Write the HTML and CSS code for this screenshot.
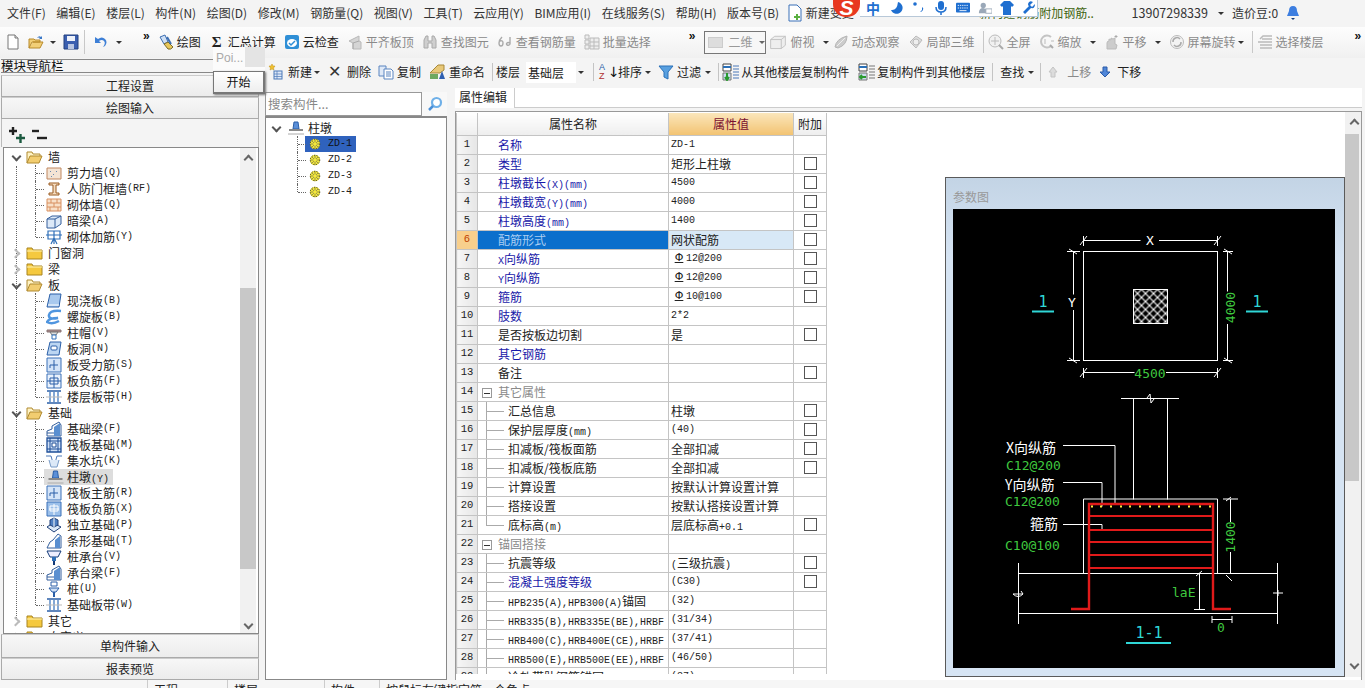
FILE: index.html
```html
<!DOCTYPE html>
<html lang="zh-CN">
<head>
<meta charset="utf-8">
<title>钢筋算量</title>
<link rel="stylesheet" href="styles.css">
</head>
<body>
<svg class="sprite" xmlns="http://www.w3.org/2000/svg">
<defs>
<symbol id="i-new" viewBox="0 0 16 16"><path d="M3 1h7l3 3v11H3z" fill="#fff" stroke="#777"/><path d="M10 1v3h3" fill="#ddd" stroke="#777"/></symbol>
<symbol id="i-open" viewBox="0 0 16 16"><path d="M1 14V5h5l1 1h5v2H4l-3 6h11l3-6H5" fill="#f2cf77" stroke="#b88a2a"/><path d="M9 4q2-3 4-1l1-1v3h-3l1-1q-1-1-3 0z" fill="#3a78c8"/></symbol>
<symbol id="i-save" viewBox="0 0 16 16"><path d="M1 1h14v14H1z" fill="#3b5fb0" stroke="#23407f"/><path d="M4 2h8v5H4z" fill="#eef2fa"/><path d="M5 10h6v5H5z" fill="#b9c6e2"/></symbol>
<symbol id="i-undo" viewBox="0 0 16 16"><path d="M3 3v6h6L7 7q3-2 5 0t-1 6l2-1q3-4 0-7t-7 0z" fill="#3d7fd6"/></symbol>
<symbol id="i-paint" viewBox="0 0 16 16"><path d="M2 3l5-2 3 7-4 2z" fill="#cfe0f5" stroke="#3d6fb2"/><path d="M6 10l4-2 5 5q-2 3-5 2z" fill="#e8c75a" stroke="#7a6a2a"/><path d="M9 3l4 7" stroke="#3d6fb2" stroke-width="2"/></symbol>
<symbol id="i-cloud" viewBox="0 0 16 16"><rect x="1" y="1" width="14" height="14" rx="2" fill="#2f8fd6"/><ellipse cx="8" cy="9" rx="5" ry="4" fill="#fff"/><path d="M5 9l2 2 4-4" fill="none" stroke="#2f8fd6" stroke-width="1.5"/></symbol>
<symbol id="i-align" viewBox="0 0 16 16"><path d="M2 7l10-5v5l2 1v7H6V9z" fill="#d5d5d5" stroke="#b8b8b8"/><path d="M6 15V9l6-2" stroke="#aaa" fill="none"/></symbol>
<symbol id="i-bino" viewBox="0 0 16 16"><path d="M2 6l2-4h2v5h4V2h2l2 4v8H10V9H6v5H2z" fill="#cfcfcf" stroke="#aaa"/></symbol>
<symbol id="i-look" viewBox="0 0 16 16"><path d="M5 3q-3 3-3 6t2 3 2-3-3-2M10 11q2 1 3-1V3M13 9q-2-1-3 0t0 2" fill="none" stroke="#aaa" stroke-width="1.4"/></symbol>
<symbol id="i-batch" viewBox="0 0 16 16"><path d="M1 1h4v4H1zM1 6h4v4H1zM1 11h4v4H1zM6 4h9v11H6z" fill="#eee" stroke="#bbb"/><path d="M6 8h9M6 12h9M10 4v11" stroke="#bbb"/></symbol>
<symbol id="i-box" viewBox="0 0 22 18"><path d="M2 6l5-4h13v11l-5 4H2z" fill="#eee" stroke="#bbb"/><path d="M2 6h13v11M15 6l5-4" fill="none" stroke="#bbb"/></symbol>
<symbol id="i-orbit" viewBox="0 0 16 16"><path d="M2 13Q3 5 14 2q0 9-9 12z" fill="#ccc" stroke="#b5b5b5"/><path d="M4 12l8-8" stroke="#eee"/></symbol>
<symbol id="i-local" viewBox="0 0 16 16"><path d="M8 2l6 4-6 8-6-6z" fill="#ddd" stroke="#bbb"/><circle cx="8" cy="8" r="3" fill="#eee" stroke="#bbb"/></symbol>
<symbol id="i-full" viewBox="0 0 16 16"><circle cx="7" cy="7" r="6" fill="#f1f1f1" stroke="#bbb"/><path d="M7 3v8M3 7h8" stroke="#bbb"/><path d="M11 11l4 4" stroke="#aaa" stroke-width="2"/></symbol>
<symbol id="i-zoom" viewBox="0 0 16 16"><path d="M12 3a6 6 0 1 0 0 9" fill="none" stroke="#c4c4c4" stroke-width="2"/><path d="M6 5v5M12 7h3" stroke="#bbb"/><path d="M11 11l3 3" stroke="#aaa" stroke-width="2"/></symbol>
<symbol id="i-pan" viewBox="0 0 16 16"><path d="M3 15V9q0-2 2-2V5l2 1V4l2 1 2-1v6l2 1-1 4z" fill="#ccc" stroke="#bbb"/><path d="M12 1v3M10.500 2.500h3" stroke="#aaa"/></symbol>
<symbol id="i-rot" viewBox="0 0 16 16"><circle cx="8" cy="8" r="6.500" fill="#f3f3f3" stroke="#bbb"/><path d="M4 8a4 4 0 0 1 7-3M12 8a4 4 0 0 1-7 3" fill="none" stroke="#aaa" stroke-width="1.500"/></symbol>
<symbol id="i-floors" viewBox="0 0 16 16"><path d="M3 5l3-3h9M1 8h14M3 11h12M3 14h12M5 5h10" stroke="#bbb" fill="none" stroke-width="1.500"/></symbol>
<symbol id="i-add" viewBox="0 0 16 16"><path d="M5 0l1 2h2L6.500 4l.5 2-2-1-2 1 .5-2L2 2h2z" fill="#f0c030" stroke="#c09010" stroke-width=".5"/><rect x="7" y="7" width="8" height="8" fill="#dfe9f7" stroke="#4a78b8"/><path d="M7 10h8M7 12.500h8M10 7v8" stroke="#4a78b8" stroke-width=".7"/></symbol>
<symbol id="i-copy" viewBox="0 0 16 16"><path d="M1 2h7v10H1z" fill="#dfe9f7" stroke="#5a85c0"/><path d="M6 5h7l2 2v8H6z" fill="#fff" stroke="#5a85c0"/><path d="M8 8h5M8 10h5M8 12h5" stroke="#5a85c0"/></symbol>
<symbol id="i-rename" viewBox="0 0 18 16"><path d="M2 9L10 1l6 0v5l-4 3z" fill="#e8c878" stroke="#a88838"/><path d="M2 10h8v5H2z" fill="#6ea860"/><path d="M11 15l3-8 3 8z" fill="#2f5fb0"/></symbol>
<symbol id="i-filter" viewBox="0 0 16 16"><path d="M1 2h14L10 8v7l-4-2V8z" fill="#58a0e0" stroke="#2a70b8"/></symbol>
<symbol id="i-cfrom" viewBox="0 0 18 18"><path d="M1 1h8v7H1z" fill="#fff" stroke="#444"/><path d="M1 4h8" stroke="#2a70b8" stroke-width="2"/><path d="M1 10h8v7H1z" fill="#cde" stroke="#777"/><path d="M5 10v6M3 14l2 3 2-3" stroke="#2a9a30" stroke-width="2" fill="none"/><path d="M11 3h6M11 6h6M11 9h6M11 12h6M11 15h6" stroke="#4a78b8"/></symbol>
<symbol id="i-cto" viewBox="0 0 18 18"><path d="M1 1h8v7H1z" fill="#fff" stroke="#444"/><path d="M1 4h8" stroke="#2a70b8" stroke-width="2"/><path d="M1 10h8v7H1z" fill="#cde" stroke="#777"/><path d="M8 14H2M4 12l-2 2 2 2" stroke="#2a9a30" stroke-width="2" fill="none"/><path d="M11 3h6M11 6h6M11 9h6M11 12h6M11 15h6" stroke="#777"/></symbol>
<symbol id="i-up" viewBox="0 0 12 12"><path d="M6 1l4 5H8v5H4V6H2z" fill="#dcdcdc" stroke="#c4c4c4"/></symbol>
<symbol id="i-down" viewBox="0 0 12 12"><path d="M4 1h4v5h3l-5 5-5-5h3z" fill="#4f86d8" stroke="#2a5aa8"/></symbol>
<symbol id="i-fo" viewBox="0 0 17 16"><path d="M1 14V3h5l1 2h7v2" fill="#fff3c4" stroke="#b08a30"/><path d="M1 14l3-7h12l-3 7z" fill="#f2cd70" stroke="#b08a30"/></symbol>
<symbol id="i-fc" viewBox="0 0 17 16"><path d="M1 14V3h5l1 2h9v9z" fill="#f5c93f" stroke="#a88420"/><path d="M1 6h15" stroke="#fff4b8"/></symbol>
<symbol id="t-shear" viewBox="0 0 16 16"><path d="M1 3h14v11H1z" fill="#f4e4d4" stroke="#c08860"/><path d="M4 6l1 1M7 9l1 1M5 11l1 1M10 6l1 1" stroke="#6a8ab0"/></symbol>
<symbol id="t-door" viewBox="0 0 16 16"><path d="M3 2h10v2h-3v8h3v2H3v-2h4V4H3z" fill="#f4dcc0" stroke="#9a5a20"/></symbol>
<symbol id="t-brick" viewBox="0 0 16 16"><path d="M1 2h14v12H1z" fill="#f8e0c8" stroke="#d89060"/><path d="M1 6h14M1 10h14M5 2v4M11 2v4M8 6v4M4 10v4M12 10v4" stroke="#d89060"/></symbol>
<symbol id="t-beam" viewBox="0 0 16 16"><path d="M1 6l5-3h9v8l-6 4H1z" fill="#dce9f8" stroke="#345f9c"/><path d="M1 6h8v9M9 6l6-3" fill="none" stroke="#345f9c"/></symbol>
<symbol id="t-mas" viewBox="0 0 16 16"><path d="M2 2h12v8H2z" fill="#fff" stroke="#2f6fb8" stroke-width="1.200"/><path d="M0 6h16M8 2v13M5 15l3-6 3 6" fill="none" stroke="#2f6fb8" stroke-width="1.200"/></symbol>
<symbol id="t-slab" viewBox="0 0 16 16"><path d="M4 1h11l-2 13H1z" fill="#a9c9ee" stroke="#2a5fa8"/><path d="M2 12h11" stroke="#fff"/></symbol>
<symbol id="t-spiral" viewBox="0 0 16 16"><path d="M15 2Q4 1 3 6t9 3Q3 9 1 13q5 3 12-1" fill="none" stroke="#4f95df" stroke-width="2.500"/></symbol>
<symbol id="t-cap" viewBox="0 0 16 16"><path d="M1 5h14v2H1z" fill="#a88" stroke="#877"/><path d="M4 7l2 3h4l2-3z" fill="#ddd" stroke="#777"/><path d="M6 10h4v4H6z" fill="#fff" stroke="#2f6fb8"/></symbol>
<symbol id="t-hole" viewBox="0 0 16 16"><path d="M4 1h11l-2 13H1z" fill="#bcd6f2" stroke="#2a5fa8"/><rect x="5" y="5" width="6" height="4" rx="1" fill="#fff" stroke="#2a5fa8"/></symbol>
<symbol id="t-g1" viewBox="0 0 16 16"><path d="M1 1h14v14H1z" fill="#d4e4f8" stroke="#3a70b8"/><path d="M8 3v10M4 8h8M4 8v3" fill="none" stroke="#2a5fa8"/></symbol>
<symbol id="t-g2" viewBox="0 0 16 16"><path d="M1 1h14v14H1z" fill="#eaf2fc" stroke="#3a70b8"/><path d="M8 1v14M1 8h14M4 5h8v6H4z" fill="none" stroke="#2a5fa8"/></symbol>
<symbol id="t-g3" viewBox="0 0 16 16"><path d="M1 1h14v14H1z" fill="#9cc0ea" stroke="#3a70b8"/><path d="M8 3v11M3 8h10M4 5h8v5H4z" fill="none" stroke="#fff"/></symbol>
<symbol id="t-band" viewBox="0 0 16 16"><path d="M1 2h14M1 14h14" stroke="#2a5fa8" stroke-width="1.500"/><path d="M4 3v10M8 3v10M12 3v10" stroke="#5a8ac8" stroke-width="1.500"/><path d="M0 8h16" stroke="#bbb"/></symbol>
<symbol id="t-fbeam" viewBox="0 0 16 16"><path d="M1 15V10l5-2V5l7-4 2 3v11H1z" fill="#fff" stroke="#345f9c"/><path d="M8 15V6l6-4v13z" fill="#5a8fd0"/><path d="M1 12h7" stroke="#345f9c"/></symbol>
<symbol id="t-raft" viewBox="0 0 16 16"><path d="M1 1h14v14H1z" fill="#cfe0f6" stroke="#1f4f98" stroke-width="1.300"/><path d="M4 1v14M12 1v14M1 4h14M1 12h14" stroke="#1f4f98"/><path d="M6 6h4v4H6z" fill="#fff" stroke="#1f4f98"/></symbol>
<symbol id="t-pit" viewBox="0 0 16 16"><path d="M0 3h5l2 7h2l2-7h5" fill="none" stroke="#4a78b8"/><path d="M3 7l2 7h6l2-7" fill="#dce9f8" stroke="#7a9cc8"/></symbol>
<symbol id="t-ped" viewBox="0 0 16 16"><path d="M6 2h4l1 7H5z" fill="#5a8fd8" stroke="#2a5fa8"/><path d="M1 10h14" stroke="#888" stroke-width="2"/><path d="M0 14h16" stroke="#aaa"/></symbol>
<symbol id="t-ind" viewBox="0 0 16 16"><path d="M1 10l6-4 8 4-7 5z" fill="#dce9f8" stroke="#1f3f78"/><path d="M4 8V3l4-2 4 2v5l-4 2z" fill="#4f7fc0" stroke="#1f3f78"/><path d="M8 1v9" stroke="#fff"/></symbol>
<symbol id="t-strip" viewBox="0 0 16 16"><path d="M1 15l3-6 3-2 5-6 3 2v12z" fill="#fff" stroke="#345f9c"/><path d="M9 15V7l5-4v12z" fill="#5a8fd0"/></symbol>
<symbol id="t-pilecap" viewBox="0 0 16 16"><path d="M1 2h14l-3 6H4z" fill="#eef" stroke="#123a78"/><path d="M6 8h4v4H6z" fill="#2f6fb8"/><path d="M8 12v4" stroke="#123a78" stroke-width="2"/></symbol>
<symbol id="t-pile" viewBox="0 0 16 16"><path d="M5 1h6v4H5z" fill="#fff" stroke="#2a5fa8"/><path d="M3 7h10l-3 4H6z" fill="#cfe0f6" stroke="#2a5fa8"/><path d="M8 11v5" stroke="#2a5fa8" stroke-width="2"/></symbol>
<symbol id="t-gear" viewBox="0 0 14 14"><circle cx="7" cy="7" r="6" fill="#f4e93a"/><circle cx="7" cy="7" r="5.500" fill="none" stroke="#222" stroke-width="1" stroke-dasharray="1.500 1.500"/><path d="M7 2v10M2 7h10M3.500 3.500l7 7M10.500 3.500l-7 7" stroke="#555" stroke-width=".7"/><circle cx="7" cy="7" r="2" fill="#f4e93a"/></symbol>
<symbol id="i-search" viewBox="0 0 16 16"><circle cx="9.500" cy="6.500" r="4.500" fill="#fff" stroke="#6fb0e8" stroke-width="2.200"/><path d="M6 10l-4 4" stroke="#4a90d8" stroke-width="2.500"/></symbol>
<symbol id="i-expand" viewBox="0 0 18 16"><path d="M1 4h8M5 0v8" stroke="#222" stroke-width="2.400"/><path d="M8 11h9M12.500 7v9" stroke="#1c5a40" stroke-width="2.400"/></symbol>
<symbol id="i-collapse" viewBox="0 0 18 16"><path d="M1 4h7" stroke="#222" stroke-width="2.400"/><path d="M6 11h10" stroke="#222" stroke-width="2.400"/></symbol>
<symbol id="i-bell" viewBox="0 0 14 16"><path d="M7 1q4 0 4 5l2 5H1l2-5q0-5 4-5z" fill="#3d7ee0"/><path d="M5 13h4l-2 2z" fill="#123a78"/></symbol>
<symbol id="i-doc" viewBox="0 0 16 18"><path d="M2 1h8l4 4v12H2z" fill="#fff" stroke="#3a70b8"/><path d="M9 10h2v2h2v2h-2v2H9v-2H7v-2h2z" fill="#5ab040"/></symbol>
</defs>
</svg>
<div class="app">
  <header class="menubar">
    <span>文件(F)</span><span>编辑(E)</span><span>楼层(L)</span><span>构件(N)</span><span>绘图(D)</span><span>修改(M)</span><span>钢筋量(Q)</span><span>视图(V)</span><span>工具(T)</span><span>云应用(Y)</span><span>BIM应用(I)</span><span>在线服务(S)</span><span>帮助(H)</span><span>版本号(B)</span>
    <span class="doc-item"><svg class="ic"><use href="#i-doc"/></svg>新建变更</span>
    <span class="news">新构建钢筋附加钢筋..</span>
    <span class="phone">13907298339</span><i class="caret"></i>
    <span class="bean">造价豆:0</span>
    <svg class="bell"><use href="#i-bell"/></svg>
  </header>

  <nav class="toolbar">
    <svg class="ic"><use href="#i-new"/></svg>
    <svg class="ic ic-open"><use href="#i-open"/></svg><i class="caret"></i>
    <svg class="ic ic-save"><use href="#i-save"/></svg>
    <b class="sep"></b>
    <svg class="ic"><use href="#i-undo"/></svg><i class="caret caret-undo"></i>
    <span class="more more-a">»</span>
    <span class="tool"><svg class="ic"><use href="#i-paint"/></svg>绘图</span>
    <span class="tool"><span class="sigma">Σ</span>汇总计算</span>
    <span class="tool"><svg class="ic"><use href="#i-cloud"/></svg>云检查</span>
    <span class="tool off"><svg class="ic"><use href="#i-align"/></svg>平齐板顶</span>
    <span class="tool off"><svg class="ic"><use href="#i-bino"/></svg>查找图元</span>
    <span class="tool off"><svg class="ic"><use href="#i-look"/></svg>查看钢筋量</span>
    <span class="tool off"><svg class="ic"><use href="#i-batch"/></svg>批量选择</span>
    <span class="more more-b">»</span>
    <span class="combo"><i class="combo-sq"></i>二维<i class="caret"></i></span>
    <span class="tool off tool-view"><svg class="ic-wide"><use href="#i-box"/></svg>俯视<i class="caret caret-far"></i></span>
    <span class="tool off"><svg class="ic"><use href="#i-orbit"/></svg>动态观察</span>
    <span class="tool off"><svg class="ic"><use href="#i-local"/></svg>局部三维</span>
    <b class="sep sep-t"></b>
    <span class="tool off"><svg class="ic"><use href="#i-full"/></svg>全屏</span>
    <span class="tool off"><svg class="ic"><use href="#i-zoom"/></svg>缩放<i class="caret caret-far"></i></span>
    <span class="tool off"><svg class="ic"><use href="#i-pan"/></svg>平移<i class="caret caret-far"></i></span>
    <span class="tool off"><svg class="ic"><use href="#i-rot"/></svg>屏幕旋转<i class="caret caret-near"></i></span>
    <b class="sep sep-t"></b>
    <span class="tool off"><svg class="ic"><use href="#i-floors"/></svg>选择楼层</span>
    <span class="more more-c">»</span>
  </nav>

  <div class="main">
    <aside class="nav">
      <div class="nav-title">模块导航栏</div>
      <div class="nav-btn nav-btn-first">工程设置</div>
      <div class="nav-btn">绘图输入</div>
      <div class="nav-tools"><svg class="ic-exp"><use href="#i-expand"/></svg><svg class="ic-exp"><use href="#i-collapse"/></svg></div>
      <div class="tree-box">
        <div class="tree">
          <div class="g"><i class="chev down"></i><svg class="fd"><use href="#i-fo"/></svg>墙</div>
          <div class="k"><svg class="ti"><use href="#t-shear"/></svg>剪力墙<span class="l">(Q)</span></div>
          <div class="k"><svg class="ti"><use href="#t-door"/></svg>人防门框墙<span class="l">(RF)</span></div>
          <div class="k"><svg class="ti"><use href="#t-brick"/></svg>砌体墙<span class="l">(Q)</span></div>
          <div class="k"><svg class="ti"><use href="#t-beam"/></svg>暗梁<span class="l">(A)</span></div>
          <div class="k last"><svg class="ti"><use href="#t-mas"/></svg>砌体加筋<span class="l">(Y)</span></div>
          <div class="g"><i class="chev right"></i><svg class="fd"><use href="#i-fc"/></svg>门窗洞</div>
          <div class="g"><i class="chev right"></i><svg class="fd"><use href="#i-fc"/></svg>梁</div>
          <div class="g"><i class="chev down"></i><svg class="fd"><use href="#i-fo"/></svg>板</div>
          <div class="k"><svg class="ti"><use href="#t-slab"/></svg>现浇板<span class="l">(B)</span></div>
          <div class="k"><svg class="ti"><use href="#t-spiral"/></svg>螺旋板<span class="l">(B)</span></div>
          <div class="k"><svg class="ti"><use href="#t-cap"/></svg>柱帽<span class="l">(V)</span></div>
          <div class="k"><svg class="ti"><use href="#t-hole"/></svg>板洞<span class="l">(N)</span></div>
          <div class="k"><svg class="ti"><use href="#t-g1"/></svg>板受力筋<span class="l">(S)</span></div>
          <div class="k"><svg class="ti"><use href="#t-g2"/></svg>板负筋<span class="l">(F)</span></div>
          <div class="k last"><svg class="ti"><use href="#t-band"/></svg>楼层板带<span class="l">(H)</span></div>
          <div class="g"><i class="chev down"></i><svg class="fd"><use href="#i-fo"/></svg>基础</div>
          <div class="k"><svg class="ti"><use href="#t-fbeam"/></svg>基础梁<span class="l">(F)</span></div>
          <div class="k"><svg class="ti"><use href="#t-raft"/></svg>筏板基础<span class="l">(M)</span></div>
          <div class="k"><svg class="ti"><use href="#t-pit"/></svg>集水坑<span class="l">(K)</span></div>
          <div class="k cur"><svg class="ti"><use href="#t-ped"/></svg><span class="cur-t">柱墩<span class="l">(Y)</span></span></div>
          <div class="k"><svg class="ti"><use href="#t-g1"/></svg>筏板主筋<span class="l">(R)</span></div>
          <div class="k"><svg class="ti"><use href="#t-g3"/></svg>筏板负筋<span class="l">(X)</span></div>
          <div class="k"><svg class="ti"><use href="#t-ind"/></svg>独立基础<span class="l">(P)</span></div>
          <div class="k"><svg class="ti"><use href="#t-strip"/></svg>条形基础<span class="l">(T)</span></div>
          <div class="k"><svg class="ti"><use href="#t-pilecap"/></svg>桩承台<span class="l">(V)</span></div>
          <div class="k"><svg class="ti"><use href="#t-fbeam"/></svg>承台梁<span class="l">(F)</span></div>
          <div class="k"><svg class="ti"><use href="#t-pile"/></svg>桩<span class="l">(U)</span></div>
          <div class="k last"><svg class="ti"><use href="#t-band"/></svg>基础板带<span class="l">(W)</span></div>
          <div class="g"><i class="chev right"></i><svg class="fd"><use href="#i-fc"/></svg>其它</div>
          <div class="g"><i class="chev right"></i><svg class="fd"><use href="#i-fc"/></svg>自定义</div>
        </div>
        <div class="vsb vsb-tree"><i class="sb-arrow up"></i><i class="thumb thumb-tree"></i><i class="sb-arrow dn"></i></div>
      </div>
      <div class="nav-btn nav-btn-low">单构件输入</div>
      <div class="nav-btn">报表预览</div>
    </aside>

    <div class="work">
      <div class="toolbar2">
        <span class="t2 t2-first"><svg class="ic"><use href="#i-add"/></svg>新建<i class="caret"></i></span>
        <span class="t2 t2-del"><span class="x">✕</span>删除</span>
        <span class="t2"><svg class="ic"><use href="#i-copy"/></svg>复制</span>
        <span class="t2"><svg class="ic ic-ren"><use href="#i-rename"/></svg>重命名</span>
        <b class="sep2"></b>
        <span>楼层</span>
        <span class="floor">基础层</span><i class="caret"></i>
        <b class="sep2 sep2-b"></b>
        <span class="t2 t2-sort"><span class="az"><em>A</em><em class="z">Z</em></span><span class="az-arrow">↓</span>排序<i class="caret"></i></span>
        <span class="t2"><svg class="ic"><use href="#i-filter"/></svg>过滤<i class="caret"></i></span>
        <b class="sep2"></b>
        <span class="t2 t2-l t2-from"><svg class="ic-l"><use href="#i-cfrom"/></svg>从其他楼层复制构件</span>
        <span class="t2 t2-l"><svg class="ic-l"><use href="#i-cto"/></svg>复制构件到其他楼层</span>
        <b class="sep2"></b>
        <span class="t2 t2-find">查找<i class="caret"></i></span>
        <b class="sep2"></b>
        <span class="t2 off t2-up"><svg class="ic-a"><use href="#i-up"/></svg>上移</span>
        <span class="t2 t2-dn"><svg class="ic-a"><use href="#i-down"/></svg>下移</span>
      </div>

      <div class="work-body">
        <section class="mid">
          <div class="search"><span class="search-in">搜索构件...</span><svg class="search-ic"><use href="#i-search"/></svg></div>
          <div class="ctree">
            <div class="c-root"><i class="chev down"></i><svg class="ti"><use href="#t-ped"/></svg>柱墩</div>
            <div class="c-k"><span class="c-sel"><svg class="gear"><use href="#t-gear"/></svg>ZD-1</span></div>
            <div class="c-k"><span class="c-it"><svg class="gear"><use href="#t-gear"/></svg>ZD-2</span></div>
            <div class="c-k"><span class="c-it"><svg class="gear"><use href="#t-gear"/></svg>ZD-3</span></div>
            <div class="c-k last"><span class="c-it"><svg class="gear"><use href="#t-gear"/></svg>ZD-4</span></div>
          </div>
        </section>

        <section class="props">
          <div class="tabs"><span class="tab">属性编辑</span></div>
          <div class="panel">
            <div class="table-wrap">
              <table class="grid">
                <colgroup><col class="c1"><col class="c2"><col class="c3"><col class="c4"></colgroup>
                <thead><tr><th></th><th>属性名称</th><th class="hv">属性值</th><th>附加</th></tr></thead>
                <tbody>
                  <tr><td class="n">1</td><td class="p b">名称</td><td class="v m">ZD-1</td><td></td></tr>
                  <tr><td class="n">2</td><td class="p b">类型</td><td class="v">矩形上柱墩</td><td class="ck"><i></i></td></tr>
                  <tr><td class="n">3</td><td class="p b">柱墩截长<span class="l">(X)(mm)</span></td><td class="v m">4500</td><td class="ck"><i></i></td></tr>
                  <tr><td class="n">4</td><td class="p b">柱墩截宽<span class="l">(Y)(mm)</span></td><td class="v m">4000</td><td class="ck"><i></i></td></tr>
                  <tr><td class="n">5</td><td class="p b">柱墩高度<span class="l">(mm)</span></td><td class="v m">1400</td><td class="ck"><i></i></td></tr>
                  <tr class="sel"><td class="n">6</td><td class="p">配筋形式</td><td class="v">网状配筋</td><td class="ck"><i></i></td></tr>
                  <tr><td class="n">7</td><td class="p b"><span class="l">X</span>向纵筋</td><td class="v m"><span class="rb">Φ</span>12@200</td><td class="ck"><i></i></td></tr>
                  <tr><td class="n">8</td><td class="p b"><span class="l">Y</span>向纵筋</td><td class="v m"><span class="rb">Φ</span>12@200</td><td class="ck"><i></i></td></tr>
                  <tr><td class="n">9</td><td class="p b">箍筋</td><td class="v m"><span class="rb">Φ</span>10@100</td><td class="ck"><i></i></td></tr>
                  <tr><td class="n">10</td><td class="p b">肢数</td><td class="v m">2*2</td><td></td></tr>
                  <tr><td class="n">11</td><td class="p">是否按板边切割</td><td class="v">是</td><td class="ck"><i></i></td></tr>
                  <tr><td class="n">12</td><td class="p b">其它钢筋</td><td class="v"></td><td></td></tr>
                  <tr><td class="n">13</td><td class="p">备注</td><td class="v"></td><td class="ck"><i></i></td></tr>
                  <tr><td class="n">14</td><td class="p gr"><i class="minus"></i>其它属性</td><td class="v"></td><td></td></tr>
                  <tr><td class="n">15</td><td class="p nest">汇总信息</td><td class="v">柱墩</td><td class="ck"><i></i></td></tr>
                  <tr><td class="n">16</td><td class="p nest">保护层厚度<span class="l">(mm)</span></td><td class="v m">(40)</td><td class="ck"><i></i></td></tr>
                  <tr><td class="n">17</td><td class="p nest">扣减板/筏板面筋</td><td class="v">全部扣减</td><td class="ck"><i></i></td></tr>
                  <tr><td class="n">18</td><td class="p nest">扣减板/筏板底筋</td><td class="v">全部扣减</td><td class="ck"><i></i></td></tr>
                  <tr><td class="n">19</td><td class="p nest">计算设置</td><td class="v">按默认计算设置计算</td><td></td></tr>
                  <tr><td class="n">20</td><td class="p nest">搭接设置</td><td class="v">按默认搭接设置计算</td><td></td></tr>
                  <tr><td class="n">21</td><td class="p nest end">底标高<span class="l">(m)</span></td><td class="v">层底标高<span class="l">+0.1</span></td><td class="ck"><i></i></td></tr>
                  <tr><td class="n">22</td><td class="p gr"><i class="minus"></i>锚固搭接</td><td class="v"></td><td></td></tr>
                  <tr><td class="n">23</td><td class="p nest">抗震等级</td><td class="v"><span class="l">(</span>三级抗震<span class="l">)</span></td><td class="ck"><i></i></td></tr>
                  <tr><td class="n">24</td><td class="p nest b">混凝土强度等级</td><td class="v m">(C30)</td><td class="ck"><i></i></td></tr>
                  <tr><td class="n">25</td><td class="p nest"><span class="l">HPB235(A),HPB300(A)</span>锚固</td><td class="v m">(32)</td><td></td></tr>
                  <tr><td class="n">26</td><td class="p nest"><span class="l">HRB335(B),HRB335E(BE),HRBF</span></td><td class="v m">(31/34)</td><td></td></tr>
                  <tr><td class="n">27</td><td class="p nest"><span class="l">HRB400(C),HRB400E(CE),HRBF</span></td><td class="v m">(37/41)</td><td></td></tr>
                  <tr><td class="n">28</td><td class="p nest"><span class="l">HRB500(E),HRB500E(EE),HRBF</span></td><td class="v m">(46/50)</td><td></td></tr>
                  <tr><td class="n">29</td><td class="p nest">冷轧带肋钢筋锚固</td><td class="v m">(37)</td><td></td></tr>
                </tbody>
              </table>
            </div>
            <div class="diagram">
              <div class="dia-title">参数图</div>
              <svg class="cad" viewBox="953 209 382 459" xmlns="http://www.w3.org/2000/svg">
                <defs><pattern id="hatch" width="8" height="8" patternUnits="userSpaceOnUse" x="1133.500" y="289.500"><path d="M0 0l8 8M8 0L0 8" stroke="#fff" stroke-width="1.100"/></pattern></defs>
                <g fill="none" stroke="#fff">
                  <rect x="1083.500" y="251.500" width="134" height="109"/>
                  <rect x="1133.500" y="289.500" width="34" height="34" fill="url(#hatch)"/>
                  <path d="M1083.500 240.500h57M1159 240.500h58.500M1080 245l7-9M1214 245l7-9M1083.500 236v10M1217.500 236v10"/>
                  <path d="M1073.500 251.500v43M1073.500 310v50.500M1067 251.500h13M1067 360.500h13M1069 249l8 5M1069 358l8 5"/>
                  <path d="M1227.500 251.500v40M1227.500 324v36.500M1223 251.500h10M1223 360.500h10M1224 249l8 5M1224 358l8 5"/>
                  <path d="M1083.500 372.500h51M1166 372.500h51.500M1080 377l7-9M1214 377l7-9M1083.500 368v10M1217.500 368v10"/>
                  <path d="M1121 398.500h58M1133.500 398.500v101M1167.500 398.500v101M1147 398l3-4 1 9 3-4"/>
                  <path d="M1083.500 573.500v-74.500h134v74.500"/>
                  <path d="M1018.500 573.500h259M1018.500 613.500h259M1018.500 563v61M1277.500 563v61M1013 594h10l-2-3M1013 594q5 5 10 0M1273 593h10M1278 590v6"/>
                  <path d="M1063 445.500h52v58M1063 482.500h39v24M1063 524.500h39v6"/>
                  <path d="M1230.500 499v23M1230.500 552v21.500M1223 499h15M1226 501l5-4M1226 575l6 6"/>
                  <path d="M1199.500 573.500v36M1194 609.500h11M1196 576l6-5"/>
                  <path d="M1212 619.500h20M1212 616v7M1232 616v7"/>
                </g>
                <g class="ct-w">
                  <text x="1150" y="245" text-anchor="middle">X</text>
                  <text x="1072" y="307" text-anchor="middle">Y</text>
                </g>
                <g class="ct-c">
                  <text x="1043" y="307" text-anchor="middle">1</text>
                  <text x="1257" y="307" text-anchor="middle">1</text>
                  <text x="1149" y="638" text-anchor="middle">1-1</text>
                </g>
                <g stroke="#2fd6d6" stroke-width="2">
                  <path d="M1032 311.500h22M1246 311.500h22M1126 643h45"/>
                </g>
                <g class="ct-g">
                  <text x="1150" y="378" text-anchor="middle">4500</text>
                  <text transform="translate(1235 307.500) rotate(-90)" text-anchor="middle">4000</text>
                  <text transform="translate(1235 537) rotate(-90)" text-anchor="middle">1400</text>
                  <text x="1172" y="597">laE</text>
                  <text x="1221" y="632" text-anchor="middle">0</text>
                  <text x="1006" y="470">C12@200</text>
                  <text x="1005" y="506">C12@200</text>
                  <text x="1005" y="550">C10@100</text>
                </g>
                <g class="ct-cn">
                  <text x="1006" y="453">X向纵筋</text>
                  <text x="1005" y="490">Y向纵筋</text>
                  <text x="1030" y="529">箍筋</text>
                </g>
                <g fill="none" stroke="#e01a1a" stroke-width="2">
                  <path d="M1071 609h18v-105h124v105h18" stroke-width="2.400"/>
                  <path d="M1089 516h124M1089 530h124M1089 542h124M1089 555h124M1089 568h124"/>
                </g>
                <path class="dots" d="M1091 506.500h2M1100 506.500h2M1110 506.500h2M1120 506.500h2M1129 506.500h2M1139 506.500h2M1149 506.500h2M1158 506.500h2M1168 506.500h2M1178 506.500h2M1188 506.500h2M1199 506.500h2M1209 506.500h2"/>
              </svg>
            </div>
            <div class="vsb vsb-panel"><i class="sb-arrow up"></i><i class="thumb thumb-panel"></i><i class="sb-arrow dn"></i></div>
          </div>
        </section>
      </div>
    </div>
  </div>

  <footer class="status"><span class="st st1"></span><span class="st st2">工程</span><span class="st st3">楼层</span><span class="st st4">构件</span><span class="st st5">按鼠标左键指定第一个角点</span></footer>

  <div class="poi"><div class="poi-top"><span>Poi...</span><i></i></div><div class="poi-btn">开始</div></div>

  <div class="ime">
    <span class="ime-s">S</span>
    <div class="ime-bar">
      <span class="ime-zh">中</span>
      <svg class="ime-ic" viewBox="0 0 14 14"><path d="M8 1a6 6 0 1 1-7 8q6 1 7-8z" fill="#1f6fd0"/></svg>
      <svg class="ime-ic" viewBox="0 0 14 14"><circle cx="3" cy="3" r="1.800" fill="#1f6fd0"/><path d="M10 6q2 1 1 3t-3 2l2-2z" fill="#1f6fd0"/></svg>
      <svg class="ime-ic" viewBox="0 0 14 14"><rect x="4" y="0" width="6" height="9" rx="3" fill="#1f6fd0"/><path d="M2 6q0 5 5 5t5-5M7 11v3" fill="none" stroke="#1f6fd0" stroke-width="1.500"/></svg>
      <svg class="ime-ic" viewBox="0 0 16 14"><rect x="0" y="1" width="16" height="11" rx="1" fill="#1f6fd0"/><path d="M2 4h12M2 7h12" stroke="#fff" stroke-dasharray="1.500 1"/><path d="M4 10h8" stroke="#fff"/></svg>
      <svg class="ime-ic" viewBox="0 0 16 14"><circle cx="6" cy="4" r="3" fill="#9aa8b8"/><path d="M1 13q0-6 5-6l3 1v5z" fill="#9aa8b8"/><rect x="9" y="8" width="7" height="5" fill="none" stroke="#9aa8b8"/></svg>
      <svg class="ime-ic" viewBox="0 0 14 14"><path d="M4 0h6l4 4-2 2-1-1v9H3V5L2 6 0 4z" fill="#1f6fd0"/></svg>
      <svg class="ime-ic" viewBox="0 0 14 14"><path d="M13 3l-3 3-2-2 3-3q-4-2-5 2 0 2 1 2l-6 6 2 2 6-6q4 1 4-4z" fill="#1f6fd0"/></svg>
    </div>
  </div>
</div>
</body>
</html>
```
FILE: styles.css
```css
* { box-sizing: border-box; }
html, body { margin: 0; padding: 0; }
body { width: 1365px; height: 688px; overflow: hidden; background: #f5f5f5; font: 12px/16px "Noto Sans CJK SC", "Liberation Sans", sans-serif; color: #222; }
.sprite { position: absolute; width: 0; height: 0; }
.app { position: relative; width: 1365px; height: 688px; overflow: hidden; display: flex; flex-direction: column; background: #f4f4f4; }
svg { display: block; flex: none; }
i, em, b { font-style: normal; font-weight: normal; }
.l { font-family: "Liberation Mono", monospace; font-size: 10px; line-height: 10px; }

.menubar { height: 27px; flex: none; display: flex; align-items: center; gap: 10.6px; padding: 0 0 1px 7px; white-space: nowrap; color: #333; }
.doc-item { display: flex; align-items: center; gap: 3px; margin-left: -3px; }
.doc-item .ic { width: 16px; height: 18px; }
.news { margin-left: 115px; color: #3f6410; }
.phone { margin-left: 27px; color: #333; font-size: 12.500px; }
.bean { margin-left: -3px; }
.bell { width: 14px; height: 16px; margin-left: -3px; }
.caret { display: inline-block; width: 0; height: 0; border: 3px solid transparent; border-top: 3px solid #333; border-bottom: 0; flex: none; }
.caret-far { margin-left: 5px; }
.caret-near { margin-left: -1px; }
.caret-undo { margin-left: 8px; }

.toolbar { height: 31px; flex: none; display: flex; align-items: center; padding: 0 0 1px 5px; background: linear-gradient(#fdfdfd, #f0f0f0); white-space: nowrap; }
.ic { width: 16px; height: 16px; }
.ic-open { margin-left: 7px; margin-right: 6px; }
.ic-save { margin-left: 7px; }
.sep { width: 1px; height: 24px; background: #c8c8c8; margin: 0 7px 0 5px; }
.sep-t { margin: 0 4px 0 0; height: 22px; }
.more { font: bold 12px/12px "Liberation Sans", sans-serif; color: #111; align-self: flex-start; flex: none; }
.more-a { margin: 3px 8px 0 21px; }
.more-b { margin: 3px 9px 0 30px; }
.more-c { margin: 3px 0 0 23px; }
.tool { display: flex; align-items: center; gap: 3px; margin-right: 8px; flex: none; }
.tool.off { color: #8a8a8a; }
.tool-view { margin-right: 4px; }
.sigma { width: 16px; text-align: center; font: bold 15px/16px "Liberation Serif", serif; color: #222; }
.combo { width: 62px; height: 23px; border: 1px solid #777; display: flex; align-items: center; color: #999; padding-left: 3px; margin-right: 3px; flex: none; background: #f7f7f7; }
.combo-sq { width: 15px; height: 11px; background: #ddd; border: 1px solid #ccc; margin-right: 5px; }
.combo .caret { margin-left: 7px; border-top-color: #666; }
.ic-wide { width: 18px; height: 16px; }

.main { flex: none; height: 622px; display: flex; }
.nav { width: 263px; flex: none; padding-left: 1px; display: flex; flex-direction: column; }
.nav-title { height: 14px; width: 258px; margin-top: 1px; border-top: 1px solid #888; border-bottom: 1px solid #888; font-size: 12.500px; line-height: 12px; color: #111; flex: none; }
.nav-btn { width: 258px; height: 22px; flex: none; border: 1px solid #aaa; border-top: 1px solid #ccc; background: linear-gradient(#f7f7f7, #ececec); text-align: center; line-height: 20px; color: #222; }
.nav-btn-first { margin-top: 2px; }
.nav-btn-low { height: 24px; line-height: 22px; }
.nav-tools { height: 28px; width: 258px; flex: none; display: flex; gap: 5px; align-items: flex-end; padding: 0 0 4px 6px; border-left: 1px solid #bbb; border-right: 1px solid #bbb; }
.ic-exp { width: 18px; height: 16px; }
.tree-box { width: 256px; height: 487px; flex: none; margin-left: 2px; border: 1px solid #888; background: #fff; display: flex; overflow: hidden; }
.tree { position: relative; flex: 1; padding-top: 1px; overflow: hidden; white-space: nowrap; color: #222; }
.tree::before { content: ""; position: absolute; left: 12px; top: 18px; height: 452px; border-left: 1px dotted #666; }
.g, .k { height: 16px; display: flex; align-items: center; position: relative; line-height: 16px; }
.g { padding-left: 8px; }
.fd { width: 17px; height: 16px; margin: 0 5px 0 6px; }
.chev { width: 8px; height: 8px; flex: none; position: relative; display: block; }
.chev::after { content: ""; position: absolute; width: 5px; height: 5px; border: solid #555; border-width: 0 2px 2px 0; }
.chev.down::after { left: 1px; top: 0; transform: rotate(45deg); }
.chev.right::after { left: 0; top: 1px; transform: rotate(-45deg); border-color: #bbb; }
.k { padding-left: 42px; }
.k::before { content: ""; position: absolute; left: 31px; top: 0; height: 16px; border-left: 1px dotted #666; }
.k.last::before { height: 8px; }
.k::after { content: ""; position: absolute; left: 32px; top: 8px; width: 8px; border-top: 1px dotted #666; }
.ti { width: 16px; height: 16px; margin-right: 5px; }
.k.cur { padding-left: 40px; }
.cur .ti { background: #ddd; margin-right: 0; width: 23px; }
.cur-t { background: #ddd; padding-right: 4px; height: 16px; }
.vsb { width: 16px; flex: none; display: flex; flex-direction: column; align-items: center; background: #f1f1f1; }
.vsb-tree { margin-right: 2px; }
.sb-arrow { display: block; width: 7px; height: 7px; flex: none; border: solid #666; border-width: 2px 0 0 2px; transform: rotate(45deg); }
.sb-arrow.up { margin-top: 8px; }
.sb-arrow.dn { transform: rotate(225deg); }
.thumb { display: block; width: 16px; background: #c8c8c8; flex: none; }
.thumb-tree { height: 281px; margin-top: 125px; }
.vsb-tree .dn { margin-top: 52px; }

.work { flex: 1; display: flex; flex-direction: column; min-width: 0; }
.toolbar2 { height: 28px; flex: none; display: flex; align-items: center; padding-left: 4px; white-space: nowrap; color: #222; }
.t2 { display: flex; align-items: center; gap: 3px; margin-right: 7px; flex: none; }
.t2 .caret { margin-left: 1px; }
.t2-first { gap: 5px; margin-right: 8px; }
.t2-first .caret { margin-left: -3px; }
.t2-del { gap: 5px; }
.x { font: 16px/16px "DejaVu Sans", sans-serif; color: #333; width: 14px; }
.sep2 { width: 1px; height: 18px; background: #c4c4c4; margin: 0 3px 0 0; flex: none; }
.sep2-b { margin: 0 5px 0 9px; }
.floor { background: #fff; margin: 0 2px 0 6px; padding: 0 12px 0 2px; height: 21px; line-height: 21px; }
.t2-sort { gap: 2px; }
.az { width: 9px; height: 18px; display: block; font: bold 9px/9px "Liberation Sans", sans-serif; color: #2a5fa8; }
.az em { display: block; }
.az .z { color: #b03030; }
.az-arrow { font: 14px/16px "DejaVu Sans", sans-serif; width: 8px; margin-left: -2px; color: #111; }
.t2-l { gap: 1px; }
.t2-from { margin-right: 9px; }
.t2-find { margin-left: 4px; margin-right: 6px; }
.ic-l { width: 18px; height: 18px; }
.ic-ren { width: 18px; }
.ic-a { width: 12px; height: 12px; }
.t2.off { color: #8a8a8a; }
.t2-up { gap: 8px; margin-left: 3px; margin-right: 8px; }
.t2-dn { gap: 6px; }

.work-body { flex: 1; display: flex; min-height: 0; }
.mid { width: 184px; flex: none; padding: 6px 0 0 2px; display: flex; flex-direction: column; }
.search { height: 24px; flex: none; display: flex; background: #f8f8f8; }
.search-in { width: 157px; border: 1px solid #999; background: #fff; color: #888; padding-left: 2px; line-height: 21px; font-size: 12.500px; }
.search-ic { width: 16px; height: 16px; margin: 4px 0 0 5px; }
.ctree { flex: 1; border: 1px solid #888; border-top: 2px solid #888; background: #fff; padding: 1px 0 0 6px; white-space: nowrap; }
.c-root { display: flex; align-items: center; height: 16px; margin-top: 1px; }
.c-root .chev { margin-right: 8px; }
.c-root .ti { margin-right: 4px; }
.c-k { position: relative; height: 16px; padding-left: 33px; display: flex; }
.c-k::before { content: ""; position: absolute; left: 25px; top: 0; height: 16px; border-left: 1px dotted #666; }
.c-k.last::before { height: 8px; }
.c-k::after { content: ""; position: absolute; left: 26px; top: 8px; width: 8px; border-top: 1px dotted #666; }
.c-sel, .c-it { display: flex; align-items: center; gap: 7px; height: 16px; padding: 0 4px 0 4px; font: 10px/16px "Liberation Mono", monospace; }
.c-sel { background: #2f62bd; color: #111; }
.gear { width: 12px; height: 12px; }

.props { flex: 1; min-width: 0; margin-left: 8px; padding-top: 2px; display: flex; flex-direction: column; background: #f4f4f4; }
.tabs { height: 20px; flex: none; background: #fff; border-bottom: 1px solid #ccc; margin-right: 3px; display: flex; }
.tab { width: 60px; height: 20px; background: #fff; border-right: 1px solid #ccc; padding: 0 0 0 4px; line-height: 17px; color: #222; }
.panel { height: 569px; flex: none; margin-top: 3px; margin-right: 3px; background: #fff; border: 1px solid #999; border-width: 1px 1px 0 1px; display: flex; overflow: hidden; }
.table-wrap { width: 371px; height: 561px; flex: none; overflow: hidden; margin-top: 1px; }
.grid { border-collapse: collapse; table-layout: fixed; width: 370px; }
.c1 { width: 21px; } .c2 { width: 191px; } .c3 { width: 125px; } .c4 { width: 33px; }
.grid th { height: 22px; padding: 0; font-weight: normal; border: 1px solid #c4c4c4; border-top: 0; background: linear-gradient(#fff, #eee); color: #222; line-height: 20px; }
.grid th.hv { background: linear-gradient(#fbe6bb, #f2c372); color: #7a1030; }
.grid td { height: 19px; padding: 0; border: 1px solid #c4c4c4; line-height: 17px; white-space: nowrap; overflow: hidden; position: relative; }
.n { text-align: center; font: 10.500px/17px "Liberation Mono", monospace; background: linear-gradient(90deg, #f6f6f6, #e6e6e6); color: #222; }
.p { padding-left: 20px !important; color: #222; }
.p.b, .p.nest.b { color: #1818a8; }
.p.gr { padding-left: 4px !important; color: #8a8a8a; }
.p.gr i.minus { display: inline-block; width: 10px; height: 10px; border: 1px solid #999; margin-right: 6px; vertical-align: -1px; background: linear-gradient(#333, #333) center / 6px 1px no-repeat #fff; }
.p.nest { padding-left: 30px !important; }
.p.nest::before { content: ""; position: absolute; left: 8px; top: 9px; width: 18px; height: 1px; background: #aaa; }
.p.nest::after { content: ""; position: absolute; left: 8px; top: 0; height: 100%; width: 1px; background: #aaa; }
.p.nest.end::after { height: 10px; }
.v { padding-left: 2px !important; color: #222; }
.v.m { font: 10px/17px "Liberation Mono", monospace; }
.rb { display: inline-block; width: 10px; margin-left: 3px; margin-right: 2px; text-align: center; font: 11px/11px "DejaVu Sans", sans-serif; text-decoration: underline; }
.sel .n { background: #f8cf8c; color: #c04000; }
.sel .p { background: #0b6fcc; color: #a9cdf2; }
.sel .v { background: #d8e8f6; }
.ck i { display: block; width: 13px; height: 13px; margin: 0 auto; border: 1px solid #555; background: #fff; }

.diagram { width: 400px; height: 500px; flex: none; margin: 65px 0 0 118px; border: 1px solid #5a5a5a; background: linear-gradient(#c3d4e5, #d6e4f3 80px); padding: 0 8px 8px 7px; display: flex; flex-direction: column; }
.dia-title { height: 31px; padding-top: 11px; line-height: 16px; color: #999; flex: none; }
.cad { width: 382px; height: 459px; background: #000; }
.cad text { font-family: "DejaVu Sans Mono", monospace; font-size: 13px; }
.ct-w text { fill: #fff; }
.ct-c text { fill: #2fd6d6; font-size: 15px; }
.ct-g text { fill: #3fc83f; }
.cad .ct-cn text { fill: #fff; font-family: "Noto Sans CJK SC", sans-serif; font-size: 14px; }
.dots { stroke: #ffe840; stroke-width: 2; fill: none; }
.vsb-panel { width: 18px; margin-left: auto; height: 565px; }
.thumb-panel { height: 347px; margin-top: 7px; width: 14px; margin-right: 4px; }
.vsb-panel .dn { margin-top: 180px; }

.status { height: 8px; flex: none; display: flex; background: #f6f6f6; overflow: hidden; font-size: 12px; line-height: 14px; color: #222; }
.st { display: block; border-right: 1px solid #ccc; padding: 3px 0 0 6px; overflow: hidden; height: 8px; }
.st1 { width: 148px; } .st2 { width: 80px; } .st3 { width: 97px; } .st4 { width: 55px; } .st5 { flex: 1; border: 0; }

.poi { position: absolute; left: 213px; top: 47px; width: 52px; height: 47px; }
.poi-top { height: 24px; background: #fbfbfb; display: flex; color: #aaa; padding-left: 3px; line-height: 22px; font-size: 12px; font-family: "Liberation Sans", sans-serif; }
.poi-top span { width: 29px; }
.poi-top i { width: 20px; background: #e4e4e4; height: 20px; }
.poi-btn { height: 23px; border: 1px solid #777; border-width: 1px 2px 2px 1px; background: linear-gradient(#fff, #eee); text-align: center; line-height: 19px; color: #111; box-shadow: 1px 1px 2px #777; }

.ime { position: absolute; left: 833px; top: 0; display: flex; height: 17px; }
.ime-s { width: 27px; height: 17px; background: #e8381e; color: #fff; border-radius: 0 0 13px 13px; text-align: center; font: italic bold 21px/15px "Liberation Sans", sans-serif; overflow: hidden; }
.ime-bar { width: 178px; height: 17px; background: #fff; border: solid #b8c8d8; border-width: 0 1px 1px 0; display: flex; align-items: center; gap: 8px; padding-left: 6px; }
.ime-zh { color: #1f6fd0; font-size: 14px; font-weight: bold; line-height: 14px; margin-right: 2px; }
.ime-ic { width: 14px; height: 14px; }
```
